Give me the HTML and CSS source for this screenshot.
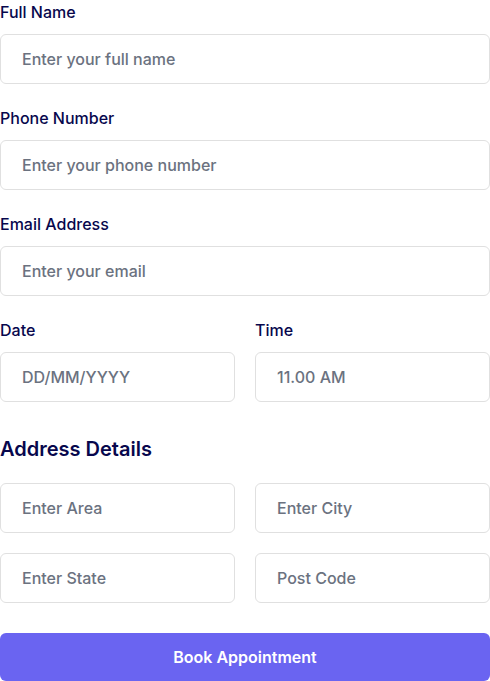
FILE: index.html
```html
<!DOCTYPE html>
<html>
<head>
<meta charset="utf-8">
<link rel="stylesheet" href="styles.css">
</head>
<body>
<form class="form">
  <div class="field">
    <label class="label" for="name">Full Name</label>
    <input class="input" id="name" type="text" placeholder="Enter your full name">
  </div>
  <div class="field">
    <label class="label" for="phone">Phone Number</label>
    <input class="input" id="phone" type="text" placeholder="Enter your phone number">
  </div>
  <div class="field">
    <label class="label" for="email">Email Address</label>
    <input class="input" id="email" type="text" placeholder="Enter your email">
  </div>
  <div class="row">
    <div class="field">
      <label class="label" for="date">Date</label>
      <input class="input" id="date" type="text" placeholder="DD/MM/YYYY">
    </div>
    <div class="field">
      <label class="label" for="time">Time</label>
      <input class="input" id="time" type="text" placeholder="11.00 AM">
    </div>
  </div>
  <h2 class="heading">Address Details</h2>
  <div class="grid">
    <input class="input" type="text" placeholder="Enter Area">
    <input class="input" type="text" placeholder="Enter City">
    <input class="input" type="text" placeholder="Enter State">
    <input class="input" type="text" placeholder="Post Code">
  </div>
  <button class="button" type="button">Book Appointment</button>
</form>
</body>
</html>
```

FILE: styles.css
```css
* { box-sizing: border-box; }
html, body { margin: 0; padding: 0; background: #fff; }
body {
  font-family: Inter, "Noto Sans", sans-serif;
  font-size: 16px;
}
.form {
  display: flex;
  flex-direction: column;
  width: 490px;
}
.field {
  display: flex;
  flex-direction: column;
  margin-bottom: 22px;
}
.label {
  display: block;
  color: #07074D;
  font-weight: 500;
  font-size: 16px;
  line-height: 24px;
  margin-bottom: 10px;
}
.input {
  display: block;
  width: 100%;
  height: 50px;
  padding: 0 20px 0 21px;
  border: 1px solid #e0e0e0;
  border-radius: 6px;
  background: #fff;
  font-family: Inter, "Noto Sans", sans-serif;
  font-size: 16px;
  font-weight: 500;
  color: #6B7280;
  outline: none;
}
.input::placeholder { color: #6B7280; opacity: 1; }
.row {
  display: grid;
  grid-template-columns: 1fr 1fr;
  column-gap: 20px;
}
.row .field { margin-bottom: 0; }
.heading {
  margin: 33px 0 20px;
  font-size: 20px;
  line-height: 28px;
  font-weight: 600;
  color: #07074D;
}
.grid {
  display: grid;
  grid-template-columns: 1fr 1fr;
  gap: 20px 20px;
}
.button {
  margin-top: 30px;
  width: 100%;
  height: 48px;
  border: none;
  border-radius: 6px;
  background: #6A64F1;
  color: #fff;
  font-family: Inter, "Noto Sans", sans-serif;
  font-size: 16px;
  font-weight: 600;
  cursor: pointer;
}
```
